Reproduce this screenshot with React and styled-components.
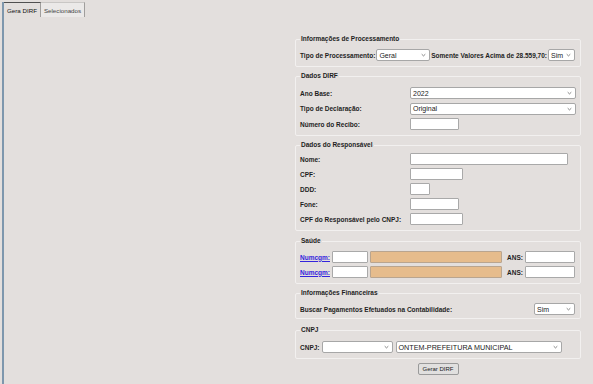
import React from 'react'
import styled, { createGlobalStyle } from 'styled-components'

const GlobalStyle = createGlobalStyle`
  html, body {
    margin: 0;
    padding: 0;
    background: #e3dfdd;
  }
  body {
    font-family: "Liberation Sans", Arial, sans-serif;
    color: #222;
  }
  * {
    box-sizing: border-box;
  }
`

const Frame = styled.div`
  margin: 2px 0 0 2px;
  height: 382px;
  border-left: 2px solid #7e97ad;
  display: flex;
  flex-direction: column;
`

const TabBar = styled.div`
  display: flex;
  height: 15px;
`

const Tab = styled.div`
  height: 15px;
  padding: 0 3px;
  display: flex;
  align-items: center;
  font-size: 6.2px;
  color: ${p => (p.$active ? '#111' : '#444')};
  background: ${p => (p.$active ? 'transparent' : '#ebe9e8')};
  border-top: 1px solid ${p => (p.$active ? '#505050' : '#c9c7c5')};
  border-right: 1px solid #a09e9c;
`

const Panel = styled.div`
  flex: 1;
  padding: 18px 0 0 291px;
`

const Form = styled.form`
  width: 286px;
  display: flex;
  flex-direction: column;
  margin: 0;
`

const Group = styled.fieldset`
  margin: 0 0 ${p => p.$mb ?? 5}px;
  padding: ${p => p.$pt ?? 6}px 5px ${p => p.$pb ?? 5}px 4px;
  border: 1px solid #f2f0ef;
  border-radius: 2px;
  min-width: 0;
`

const Legend = styled.legend`
  padding: 0 1px;
  font-size: 6.5px;
  font-weight: bold;
  line-height: 8px;
  color: #1e1e1e;
`

const Grid = styled.div`
  display: grid;
  grid-template-columns: 110px 1fr;
  row-gap: ${p => p.$gap ?? 3}px;
  align-items: center;
`

const Stack = styled.div`
  display: flex;
  flex-direction: column;
  gap: 3px;
`

const Row = styled.div`
  display: flex;
  align-items: center;
  gap: ${p => p.$gap ?? 1}px;
  justify-content: ${p => (p.$spread ? 'space-between' : 'flex-start')};
`

const Label = styled.span`
  font-size: 6.5px;
  font-weight: bold;
  color: #1e1e1e;
  white-space: nowrap;
  margin-left: ${p => p.$ml ?? 0}px;
`

const Link = styled.a`
  font-size: 6.5px;
  font-weight: bold;
  color: #3324dc;
  text-decoration: underline;
  white-space: nowrap;
  cursor: pointer;
  margin-right: 1px;
`

const Input = styled.input`
  width: ${p => p.$w}px;
  height: 12px;
  margin: 0 0 0 ${p => p.$ml ?? 0}px;
  padding: 0 2px;
  font-size: 7px;
  background: ${p => (p.$filled ? '#e6bc8c' : '#fff')};
  border: 1px solid ${p => (p.$filled ? '#b9a58f' : '#a9a9a9')};
  border-radius: 1px;
`

const SelectBox = styled.div`
  width: ${p => p.$w}px;
  height: 12px;
  display: flex;
  align-items: center;
  justify-content: space-between;
  padding: 0 3px 0 2px;
  background: #fff;
  border: 1px solid #a7a7a7;
  border-radius: 2px;
  font-size: ${p => p.$fs ?? 7}px;
  color: #222;
  white-space: nowrap;
  margin-left: ${p => p.$ml ?? 0}px;
`

const Button = styled.button`
  align-self: center;
  margin-top: 2px;
  width: 41px;
  height: 12px;
  padding: 0;
  font-family: inherit;
  font-size: 6px;
  color: #222;
  background: #e1e0df;
  border: 1px solid #9a9a9a;
  border-radius: 2px;
`

const Chevron = () => (
  <svg width="5" height="4" viewBox="0 0 5 4">
    <path d="M0.7 1.2 L2.5 2.9 L4.3 1.2" fill="none" stroke="#666" strokeWidth="0.8" />
  </svg>
)

const Select = ({ w, fs, ml, children }) => (
  <SelectBox $w={w} $fs={fs} $ml={ml}>
    <span>{children}</span>
    <Chevron />
  </SelectBox>
)

const SaudeRow = () => (
  <Row>
    <Link>Numcgm:</Link>
    <Input $w={36} />
    <Input $w={133} $filled $ml={1} />
    <Label $ml={4}>ANS:</Label>
    <Input $w={50} $ml={1} />
  </Row>
)

export default function App() {
  return (
    <>
      <GlobalStyle />
      <Frame>
        <TabBar>
          <Tab $active>Gera DIRF</Tab>
          <Tab>Selecionados</Tab>
        </TabBar>
        <Panel>
          <Form onSubmit={e => e.preventDefault()}>
            <Group $mb={5}>
              <Legend>Informações de Processamento</Legend>
              <Row>
                <Label>Tipo de Processamento:</Label>
                <Select w={54}>Geral</Select>
                <Label>Somente Valores Acima de 28.559,70:</Label>
                <Select w={27}>Sim</Select>
              </Row>
            </Group>

            <Group $pt={7}>
              <Legend>Dados DIRF</Legend>
              <Grid $gap={3.5}>
                <Label>Ano Base:</Label>
                <Select w={166}>2022</Select>
                <Label>Tipo de Declaração:</Label>
                <Select w={166}>Original</Select>
                <Label>Número do Recibo:</Label>
                <Input $w={49} />
              </Grid>
            </Group>

            <Group $mb={6} $pt={4}>
              <Legend>Dados do Responsável</Legend>
              <Grid>
                <Label>Nome:</Label>
                <Input $w={158} />
                <Label>CPF:</Label>
                <Input $w={53} />
                <Label>DDD:</Label>
                <Input $w={20} />
                <Label>Fone:</Label>
                <Input $w={49} />
                <Label>CPF do Responsável pelo CNPJ:</Label>
                <Input $w={53} />
              </Grid>
            </Group>

            <Group $mb={5} $pt={6}>
              <Legend>Saúde</Legend>
              <Stack>
                <SaudeRow />
                <SaudeRow />
              </Stack>
            </Group>

            <Group $mb={7} $pb={3}>
              <Legend>Informações Financeiras</Legend>
              <Row $spread>
                <Label>Buscar Pagamentos Efetuados na Contabilidade:</Label>
                <Select w={41}>Sim</Select>
              </Row>
            </Group>

            <Group $mb={2} $pt={7}>
              <Legend>CNPJ</Legend>
              <Row $gap={2}>
                <Label>CNPJ:</Label>
                <Select w={71}> </Select>
                <Select w={166} fs={7.2} ml={1}>ONTEM-PREFEITURA MUNICIPAL</Select>
              </Row>
            </Group>

            <Button type="submit">Gerar DIRF</Button>
          </Form>
        </Panel>
      </Frame>
    </>
  )
}
